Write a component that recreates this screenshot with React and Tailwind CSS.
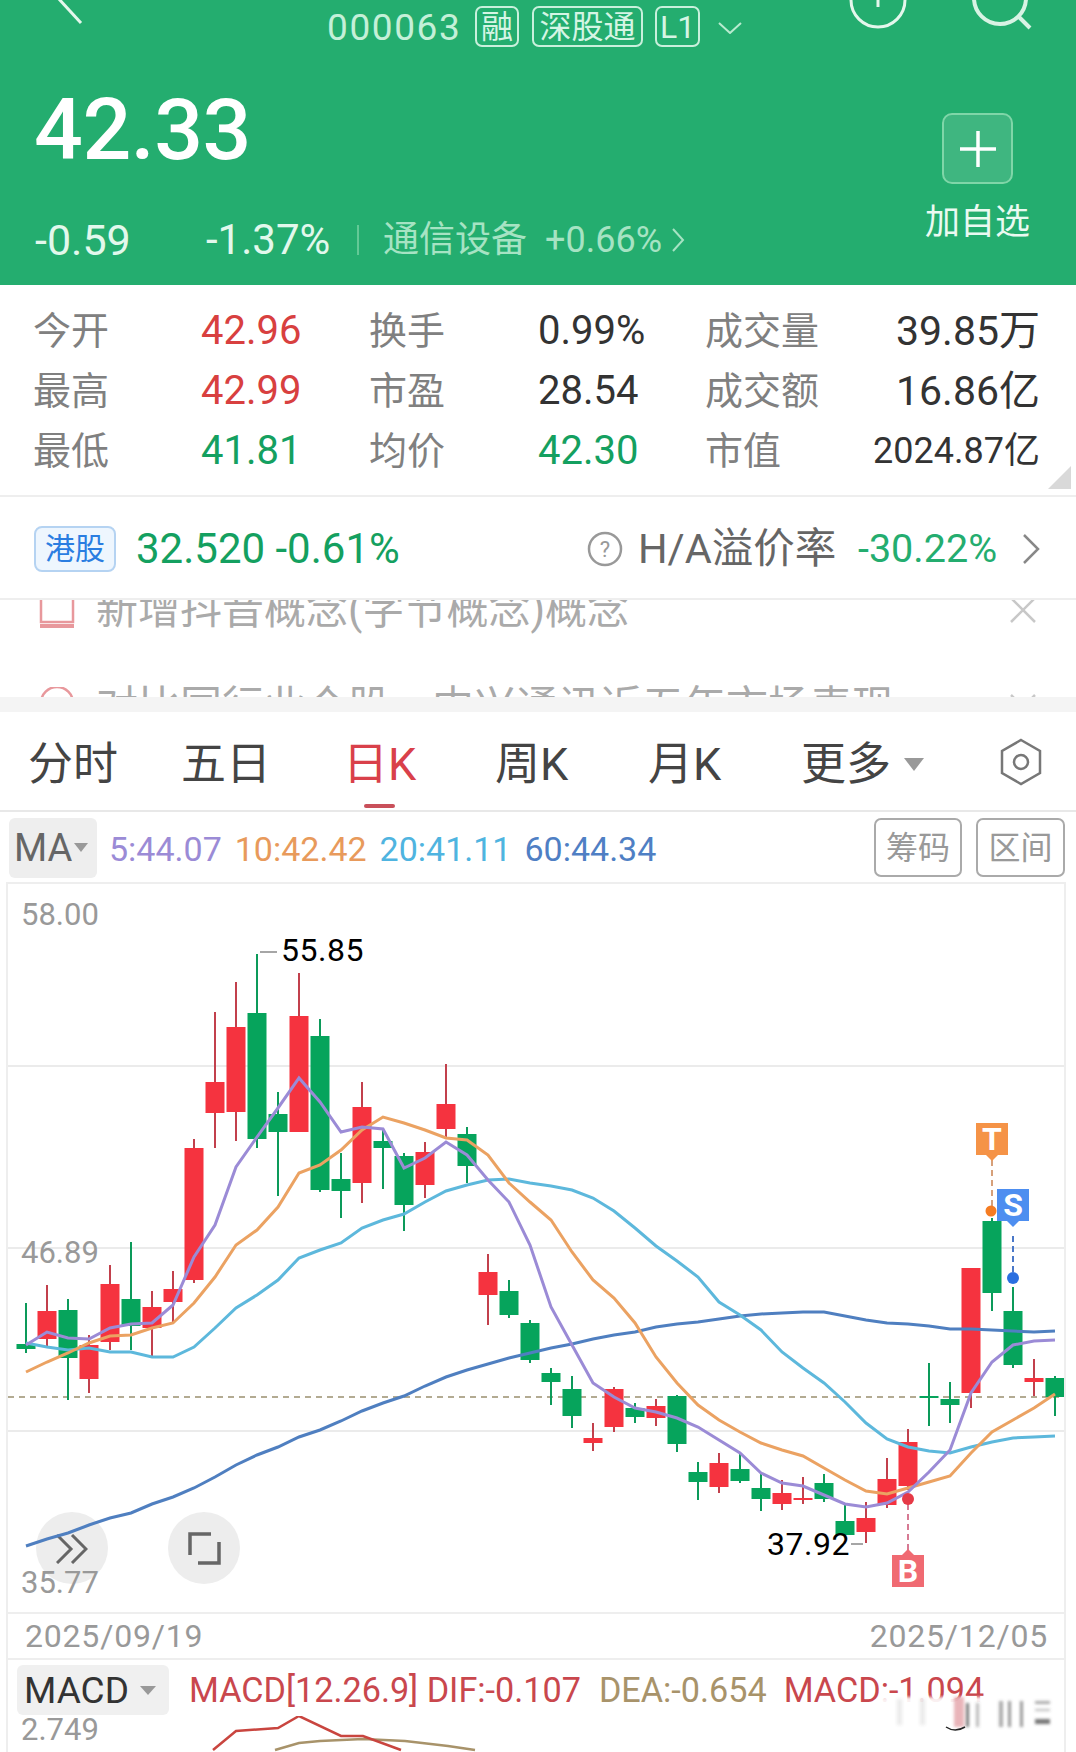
import React from "react";

// wick top, wick bottom, body top, body bottom, colour (r / g)
const candles = [
  [1303, 1353, 1344, 1349, "g"], [1285, 1348, 1311, 1339, "r"], [1299, 1400, 1310, 1358, "g"],
  [1335, 1393, 1345, 1379, "r"], [1265, 1350, 1284, 1342, "r"], [1242, 1350, 1299, 1326, "g"],
  [1291, 1357, 1307, 1328, "r"], [1271, 1323, 1289, 1302, "r"], [1139, 1283, 1148, 1280, "r"],
  [1012, 1148, 1082, 1113, "r"], [982, 1141, 1027, 1112, "r"], [954, 1148, 1013, 1139, "g"],
  [1092, 1196, 1114, 1132, "g"], [973, 1132, 1016, 1132, "r"], [1019, 1192, 1036, 1190, "g"],
  [1153, 1218, 1179, 1191, "g"], [1082, 1203, 1107, 1183, "r"], [1130, 1189, 1141, 1148, "g"],
  [1153, 1231, 1156, 1205, "g"], [1142, 1198, 1152, 1185, "r"], [1064, 1137, 1104, 1129, "r"],
  [1127, 1183, 1134, 1166, "g"], [1254, 1325, 1272, 1295, "r"], [1280, 1318, 1291, 1315, "g"],
  [1320, 1363, 1323, 1360, "g"], [1368, 1405, 1373, 1382, "g"], [1376, 1428, 1389, 1416, "g"],
  [1423, 1451, 1438, 1443, "r"], [1387, 1432, 1389, 1427, "r"], [1403, 1423, 1408, 1417, "g"],
  [1399, 1426, 1406, 1418, "r"], [1395, 1452, 1396, 1444, "g"], [1462, 1500, 1472, 1482, "g"],
  [1453, 1493, 1463, 1487, "r"], [1452, 1483, 1469, 1481, "g"], [1474, 1511, 1488, 1499, "g"],
  [1480, 1510, 1493, 1504, "r"], [1477, 1504, 1498, 1499, "r"], [1474, 1502, 1483, 1499, "g"],
  [1504, 1537, 1521, 1535, "g"], [1502, 1543, 1518, 1532, "r"], [1458, 1508, 1479, 1505, "r"],
  [1429, 1490, 1442, 1486, "r"], [1363, 1426, 1396, 1397, "g"], [1382, 1423, 1399, 1405, "g"],
  [1268, 1408, 1268, 1393, "r"], [1218, 1311, 1221, 1293, "g"], [1287, 1368, 1311, 1365, "g"],
  [1359, 1396, 1378, 1382, "r"], [1376, 1416, 1378, 1397, "g"],
];

const ma5 = [1345, 1332, 1338, 1339, 1328, 1324, 1323, 1305, 1257, 1225, 1167, 1137, 1108, 1078, 1102, 1132, 1127, 1129, 1168, 1158, 1142, 1155, 1180, 1202, 1245, 1307, 1345, 1383, 1397, 1408, 1412, 1418, 1427, 1440, 1453, 1473, 1483, 1486, 1495, 1504, 1507, 1503, 1492, 1472, 1450, 1393, 1362, 1345, 1341, 1340];
const ma10 = [1372, 1362, 1353, 1343, 1336, 1335, 1328, 1323, 1303, 1277, 1245, 1230, 1207, 1173, 1165, 1150, 1130, 1117, 1123, 1130, 1138, 1140, 1155, 1183, 1202, 1220, 1252, 1280, 1298, 1323, 1357, 1383, 1405, 1420, 1432, 1443, 1450, 1456, 1468, 1480, 1491, 1494, 1488, 1482, 1476, 1453, 1432, 1420, 1408, 1394];
const ma20 = [1343, 1347, 1350, 1348, 1352, 1352, 1357, 1357, 1347, 1328, 1308, 1295, 1280, 1258, 1250, 1243, 1228, 1220, 1214, 1202, 1191, 1185, 1180, 1179, 1183, 1186, 1190, 1198, 1211, 1228, 1246, 1261, 1277, 1302, 1315, 1330, 1352, 1368, 1383, 1402, 1423, 1439, 1447, 1451, 1453, 1447, 1442, 1438, 1437, 1436];
const ma60 = [1546, 1539, 1533, 1525, 1518, 1513, 1504, 1497, 1488, 1477, 1465, 1455, 1447, 1437, 1430, 1421, 1411, 1403, 1396, 1386, 1377, 1370, 1364, 1358, 1353, 1348, 1344, 1339, 1335, 1332, 1327, 1324, 1322, 1319, 1316, 1314, 1313, 1312, 1312, 1316, 1320, 1323, 1324, 1326, 1329, 1329, 1330, 1331, 1332, 1331];

const candleX = (i) => 26 + 21 * i;
const linePoints = (ys) => ys.map((y, i) => `${candleX(i)},${y}`).join(" ");

const stats = [
  ["今开", "42.96", "text-[#d8403f]", "换手", "0.99%", "text-[#333]", "成交量", "39.85万", "text-[41px]"],
  ["最高", "42.99", "text-[#d8403f]", "市盈", "28.54", "text-[#333]", "成交额", "16.86亿", "text-[41px]"],
  ["最低", "41.81", "text-[#14a060]", "均价", "42.30", "text-[#14a060]", "市值", "2024.87亿", "text-[36px]"],
];

const Badge = ({ className, children }) => (
  <span className={`flex h-[41px] items-center justify-center rounded-[7px] border-2 border-[#c9f0dc] text-[32px] leading-none text-[#d5f5e4] ${className}`}>
    {children}
  </span>
);

function Header() {
  return (
    <div className="h-[285px] overflow-hidden bg-[#24ad6f]">
      <div className="flex h-[53px] items-start">
        <svg className="ml-[48px] shrink-0" width="40" height="28" viewBox="0 0 40 28" fill="none" stroke="#e4f7ec" strokeWidth="3">
          <path d="M10 -2 L33 23" />
        </svg>
        <span className="ml-[239px] mt-[8px] w-[133px] text-[37px] leading-[40px] tracking-[1.6px] text-[#c4f0d8]">000063</span>
        <Badge className="ml-[15px] mt-[6px] w-[44px]">融</Badge>
        <Badge className="ml-[13px] mt-[6px] w-[111px]">深股通</Badge>
        <Badge className="ml-[12px] mt-[6px] w-[45px]">L1</Badge>
        <svg className="ml-[18px] mt-[22px] shrink-0" width="24" height="12" viewBox="0 0 24 12" fill="none" stroke="#b8ebcf" strokeWidth="2">
          <path d="M1 1 L12 11 L23 1" />
        </svg>
        <svg className="ml-[106px] shrink-0" width="60" height="32" viewBox="0 0 60 32" fill="none" stroke="#e4f7ec" strokeWidth="3">
          <circle cx="30" cy="0" r="27" />
          <path d="M30 -6 V7" />
        </svg>
        <svg className="ml-[62px] shrink-0" width="66" height="32" viewBox="0 0 66 32" fill="none" stroke="#d8f3e4" strokeWidth="4">
          <circle cx="30" cy="-2" r="26" />
          <path d="M48 16 L60 28" />
        </svg>
      </div>
      <div className="flex justify-between">
        <div className="pl-[34px]">
          <div className="mt-[32px] h-[90px] text-[86px] font-medium leading-[90px] tracking-[-0.5px] text-white">42.33</div>
          <div className="mt-[45px] flex h-[40px] items-center">
            <span className="ml-[1px] w-[171px] text-[43px] leading-none text-[#e2f8ec]">-0.59</span>
            <span className="w-[148px] whitespace-nowrap text-[42px] leading-none text-[#e2f8ec]">-1.37%</span>
            <span className="ml-[3px] h-[30px] w-[2px] bg-[#63c996]" />
            <span className="ml-[24px] text-[36px] leading-none text-[#a6e3c3]">通信设备</span>
            <span className="ml-[18px] text-[36px] leading-none text-[#a6e3c3]">+0.66%</span>
            <svg className="ml-[9px]" width="14" height="26" viewBox="0 0 14 26" fill="none" stroke="#a6e3c3" strokeWidth="2">
              <path d="M2 2 L12 13 L2 24" />
            </svg>
          </div>
        </div>
        <div className="mr-[46px] flex w-[105px] flex-col items-center">
          <div className="mt-[60px] flex h-[71px] w-[71px] items-center justify-center rounded-[10px] border-2 border-[#7fd6a8] bg-[#3fb680]">
            <svg width="36" height="36" viewBox="0 0 36 36" stroke="#fff" strokeWidth="3.5">
              <path d="M18 0 V36 M0 18 H36" />
            </svg>
          </div>
          <span className="mt-[21px] whitespace-nowrap text-[35px] leading-[36px] text-[#eafaf1]">加自选</span>
        </div>
      </div>
    </div>
  );
}

function Stats() {
  return (
    <div className="relative h-[212px] border-b-2 border-[#eee] pt-[16px]">
      {stats.map((row) => (
        <div key={row[0]} className="flex h-[60px] items-center">
          <span className="ml-[33px] w-[168px] text-[38px] leading-none text-[#808080]">{row[0]}</span>
          <span className={`w-[168px] text-[40px] leading-none ${row[2]}`}>{row[1]}</span>
          <span className="w-[169px] text-[38px] leading-none text-[#808080]">{row[3]}</span>
          <span className={`w-[167px] text-[40px] leading-none ${row[5]}`}>{row[4]}</span>
          <span className="w-[150px] text-[38px] leading-none text-[#808080]">{row[6]}</span>
          <span className={`w-[185px] whitespace-nowrap text-right leading-none text-[#333] ${row[8]}`}>{row[7]}</span>
        </div>
      ))}
      <div className="absolute bottom-[6px] right-[5px] h-0 w-0 border-b-[23px] border-l-[23px] border-b-[#d9d9d9] border-l-transparent" />
    </div>
  );
}

function HkRow() {
  return (
    <div className="flex h-[103px] items-center border-b-2 border-[#eee] pl-[34px] pt-[2px]">
      <span className="flex h-[46px] w-[82px] items-center justify-center rounded-[8px] border-2 border-[#b5d3f2] bg-[#eef6fe] text-[30px] leading-none text-[#2a7de1]">港股</span>
      <span className="ml-[20px] w-[264px] whitespace-nowrap text-[42px] leading-none text-[#14a060]">32.520 -0.61%</span>
      <svg className="ml-[187px] shrink-0" width="36" height="36" viewBox="0 0 36 36" fill="none">
        <circle cx="18" cy="18" r="16" stroke="#999" strokeWidth="2.5" />
        <text x="18" y="26" textAnchor="middle" fontSize="22" fill="#999" fontFamily="Roboto">?</text>
      </svg>
      <span className="ml-[15px] w-[197px] whitespace-nowrap text-[41.5px] leading-none text-[#666]">H/A溢价率</span>
      <span className="ml-[23px] w-[139px] whitespace-nowrap text-[39.5px] leading-none text-[#24ad6f]">-30.22%</span>
      <svg className="ml-[25px] shrink-0" width="18" height="32" viewBox="0 0 18 32" fill="none" stroke="#888" strokeWidth="2.5">
        <path d="M2 2 L16 16 L2 30" />
      </svg>
    </div>
  );
}

function CloseIcon() {
  return (
    <svg className="ml-auto mr-[40px] shrink-0" width="26" height="26" viewBox="0 0 26 26" stroke="#c8c8c8" strokeWidth="2.5">
      <path d="M1 1 L25 25 M25 1 L1 25" />
    </svg>
  );
}

function Notices() {
  return (
    <div className="h-[97px] overflow-hidden">
      <div className="-mt-[39px]">
        <div className="flex h-[97px] items-center pl-[39px]">
          <svg width="36" height="40" viewBox="0 0 36 40" fill="none" stroke="#e8989c" strokeWidth="2.5">
            <rect x="2" y="2" width="32" height="30" />
            <path d="M1 36 H35" strokeWidth="4" />
          </svg>
          <span className="ml-[21px] whitespace-nowrap text-[42px] leading-none text-[#aaa]">新增抖音概念(字节概念)概念</span>
          <CloseIcon />
        </div>
        <div className="flex h-[97px] items-center pl-[39px]">
          <svg width="36" height="40" viewBox="0 0 36 40" fill="none" stroke="#e8989c" strokeWidth="2.5">
            <circle cx="18" cy="16" r="16" />
            <circle cx="18" cy="16" r="3" />
          </svg>
          <span className="ml-[21px] whitespace-nowrap text-[42px] leading-none text-[#aaa]">对比同行业个股，中兴通讯近五年市场表现</span>
          <CloseIcon />
        </div>
      </div>
    </div>
  );
}

function Tabs() {
  return (
    <div className="relative flex h-[100px] items-center whitespace-nowrap border-b-2 border-[#e8e8e8] pl-[28px] pt-[6px] text-[45px] leading-none text-[#444]">
      <span className="w-[90px] shrink-0">分时</span>
      <span className="ml-[63px] w-[90px] shrink-0">五日</span>
      <span className="ml-[72px] w-[74px] shrink-0 text-[#d9404a]">日K</span>
      <span className="ml-[78px] w-[74px] shrink-0">周K</span>
      <span className="ml-[79px] w-[74px] shrink-0">月K</span>
      <span className="ml-[79px] w-[90px] shrink-0">更多</span>
      <div className="ml-[13px] h-0 w-0 shrink-0 border-x-[10px] border-t-[13px] border-x-transparent border-t-[#999]" />
      <svg className="ml-[76px] -mt-[4px] shrink-0" width="42" height="48" viewBox="0 0 42 48" fill="none" stroke="#777" strokeWidth="2.5">
        <path d="M21 2 L40 13 V35 L21 46 L2 35 V13 Z" />
        <circle cx="21" cy="24" r="7" />
      </svg>
      <div className="absolute bottom-[2px] left-[364px] h-[4px] w-[31px] rounded-[2px] bg-[#c9505a]" />
    </div>
  );
}

function MaRow() {
  return (
    <div className="flex h-[70px] items-center pl-[9px] pt-[1px]">
      <div className="flex h-[60px] w-[88px] items-center rounded-[6px] bg-[#eee] pl-[5px]">
        <span className="text-[38px] leading-none text-[#666]">MA</span>
        <div className="ml-[2px] h-0 w-0 border-x-[7px] border-t-[9px] border-x-transparent border-t-[#999]" />
      </div>
      <div className="ml-[12px] mt-[3px] flex gap-[13px] whitespace-nowrap text-[34px] leading-none">
        <span className="text-[#9b8bd6]">5:44.07</span>
        <span className="text-[#e89a5b]">10:42.42</span>
        <span className="text-[#4fb4e0]">20:41.11</span>
        <span className="text-[#4f7fc4]">60:44.34</span>
      </div>
      <span className="ml-auto flex h-[59px] w-[88px] items-center justify-center rounded-[7px] border-2 border-[#aaa] text-[32px] leading-none text-[#999]">筹码</span>
      <span className="ml-[14px] mr-[11px] flex h-[59px] w-[89px] items-center justify-center rounded-[7px] border-2 border-[#aaa] text-[32px] leading-none text-[#999]">区间</span>
    </div>
  );
}

function Flag({ x, y, color, label, up }) {
  // little tag with a pointer, 32 wide and 32 high
  const tip = up ? `${x - 6},${y} ${x},${y - 6} ${x + 6},${y}` : `${x - 6},${y + 32} ${x},${y + 38} ${x + 6},${y + 32}`;
  return (
    <g>
      <rect x={x - 16} y={y} width="32" height="32" fill={color} />
      <polygon points={tip} fill={color} />
      <text x={x} y={y + 27} textAnchor="middle" fontSize="32" fontWeight="700" fill="#fff">{label}</text>
    </g>
  );
}

function CandleChart() {
  return (
    <div className="relative h-[728px]">
      <div className="absolute left-[28px] top-[628px] flex h-[72px] w-[72px] items-center justify-center rounded-full bg-[#ededed]">
        <svg className="mt-[2px]" width="32" height="30" viewBox="0 0 32 30" fill="none" stroke="#666" strokeWidth="3">
          <path d="M1 1 L15 15 L1 29 M16 1 L30 15 L16 29" />
        </svg>
      </div>
      <div className="absolute left-[160px] top-[628px] flex h-[72px] w-[72px] items-center justify-center rounded-full bg-[#ededed]">
        <svg width="34" height="34" viewBox="0 0 34 34" fill="none" stroke="#666" strokeWidth="3.5">
          <path d="M24 3 H3 V24 M32 11 V32 H11" />
        </svg>
      </div>
      <svg className="relative block" width="1056" height="728" viewBox="8 884 1056 728" fontFamily="Roboto">
        {[1066, 1248, 1431].map((y) => (
          <line key={y} x1="8" x2="1064" y1={y} y2={y} stroke="#ebebeb" strokeWidth="2" />
        ))}
        <text x="21" y="925" fontSize="31" fill="#999">58.00</text>
        <text x="21" y="1263" fontSize="31" fill="#999">46.89</text>
        <text x="21" y="1593" fontSize="31" fill="#999">35.77</text>
        <line x1="8" x2="1064" y1="1397" y2="1397" stroke="#b3ab92" strokeWidth="2" strokeDasharray="6 5" />
        {candles.map(([wt, wb, bt, bb, c], i) => (
          <g key={i}>
            <line x1={candleX(i)} x2={candleX(i)} y1={wt} y2={wb} stroke={c === "r" ? "#c2404c" : "#0c9a5a"} strokeWidth="2" />
            <rect x={candleX(i) - 9.5} y={bt} width="19" height={Math.max(bb - bt, 2)} fill={c === "r" ? "#f5333f" : "#06a45c"} />
          </g>
        ))}
        <polyline points={linePoints(ma60)} fill="none" stroke="#4f7fc0" strokeWidth="3" />
        <polyline points={linePoints(ma20)} fill="none" stroke="#5db8dc" strokeWidth="3" />
        <polyline points={linePoints(ma10)} fill="none" stroke="#eba262" strokeWidth="3" />
        <polyline points={linePoints(ma5)} fill="none" stroke="#9b8bd6" strokeWidth="3" />
        <line x1="260" x2="277" y1="952" y2="952" stroke="#888" strokeWidth="1.5" />
        <text x="281" y="961" fontSize="32" letterSpacing="0.5" fill="#000">55.85</text>
        <text x="767" y="1555" fontSize="32" letterSpacing="0.5" fill="#000">37.92</text>
        <line x1="851" x2="863" y1="1544" y2="1544" stroke="#888" strokeWidth="1.5" />
        <line x1="992" x2="992" y1="1160" y2="1206" stroke="#d6a07a" strokeWidth="2" strokeDasharray="6 4" />
        <circle cx="991" cy="1211" r="5.5" fill="#f57c22" />
        <Flag x={992} y={1123} color="#f59347" label="T" />
        <line x1="1013" x2="1013" y1="1236" y2="1274" stroke="#4a78c8" strokeWidth="2" strokeDasharray="6 4" />
        <circle cx="1013" cy="1278" r="6" fill="#2b6fe0" />
        <Flag x={1013} y={1189} color="#4d8ef0" label="S" />
        <line x1="908" x2="908" y1="1504" y2="1550" stroke="#d77a94" strokeWidth="2" strokeDasharray="6 4" />
        <circle cx="908" cy="1499" r="6" fill="#e63946" />
        <Flag x={908} y={1555} color="#f06a72" label="B" up />
      </svg>
    </div>
  );
}

function MacdPanel() {
  return (
    <div className="relative h-[92px]">
      <div className="flex h-[56px] items-center pl-[9px] pt-[4px]">
        <div className="flex h-[50px] w-[152px] items-center rounded-[6px] bg-[#f0f0f0] pl-[7px]">
          <span className="text-[37px] leading-none text-[#333]">MACD</span>
          <div className="ml-[11px] h-0 w-0 border-x-[8px] border-t-[9px] border-x-transparent border-t-[#999]" />
        </div>
        <div className="ml-[20px] flex whitespace-nowrap text-[34.2px] leading-none">
          <span className="text-[#c9474d]">MACD[12.26.9] DIF:-0.107</span>
          <span className="ml-[18px] text-[#a8936a]">DEA:-0.654</span>
          <span className="ml-[17px] text-[#c9474d]">MACD:-1.094</span>
        </div>
      </div>
      <svg className="block" width="1056" height="36" viewBox="8 1717 1056 36" fontFamily="Roboto">
        <text x="21" y="1741" fontSize="31" fill="#999">2.749</text>
        <polyline points="275,1751 299,1744 320,1742 363,1740 405,1742 448,1747 475,1751" fill="none" stroke="#a8936a" strokeWidth="2.5" />
        <polyline points="213,1751 236,1732 278,1729 299,1717 341,1737 363,1737 401,1751" fill="none" stroke="#c9453f" strokeWidth="2.5" />
      </svg>
      {/* blurred stamp that lies over the end of the legend */}
      <svg className="absolute left-[872px] top-[35px]" width="176" height="40" viewBox="0 0 176 40">
        <defs>
          <filter id="smear"><feGaussianBlur stdDeviation="1.5" /></filter>
        </defs>
        <rect x="0" y="2" width="176" height="36" fill="#fff" opacity="0.92" filter="url(#smear)" />
        <g filter="url(#smear)" fill="#555">
          <rect x="17" y="4" width="5" height="26" opacity="0.12" />
          <rect x="40" y="4" width="5" height="26" opacity="0.12" />
          <rect x="74" y="2" width="10" height="30" fill="#c9474d" opacity="0.4" />
          <rect x="86" y="8" width="3" height="24" opacity="0.8" />
          <rect x="96" y="8" width="3" height="24" opacity="0.4" />
          <rect x="119" y="6" width="4" height="26" opacity="0.5" />
          <rect x="128" y="6" width="3" height="26" opacity="0.6" />
          <rect x="140" y="6" width="3" height="26" opacity="0.6" />
          <rect x="155" y="6" width="15" height="3" opacity="0.5" />
          <rect x="155" y="14" width="15" height="2" opacity="0.4" />
          <rect x="155" y="24" width="15" height="5" opacity="0.8" />
        </g>
        <path d="M66 32 Q75 38 85 32" fill="none" stroke="#222" strokeWidth="1.5" />
      </svg>
    </div>
  );
}

export default function App() {
  return (
    <div className="h-[1752px] w-[1076px] overflow-hidden bg-white font-[Roboto,'Noto_Sans_CJK_SC',sans-serif]">
      <Header />
      <Stats />
      <HkRow />
      <Notices />
      <div className="h-[15px] bg-[#f4f4f4]" />
      <Tabs />
      <MaRow />
      <div className="mx-[6px] w-[1060px] border-x-2 border-t-2 border-[#eee]">
        <CandleChart />
        <div className="flex h-[48px] items-center justify-between border-y-2 border-[#eee] pl-[17px] pr-[16px] text-[32px] leading-none tracking-[0.8px] text-[#999]">
          <span>2025/09/19</span>
          <span>2025/12/05</span>
        </div>
        <MacdPanel />
      </div>
    </div>
  );
}
